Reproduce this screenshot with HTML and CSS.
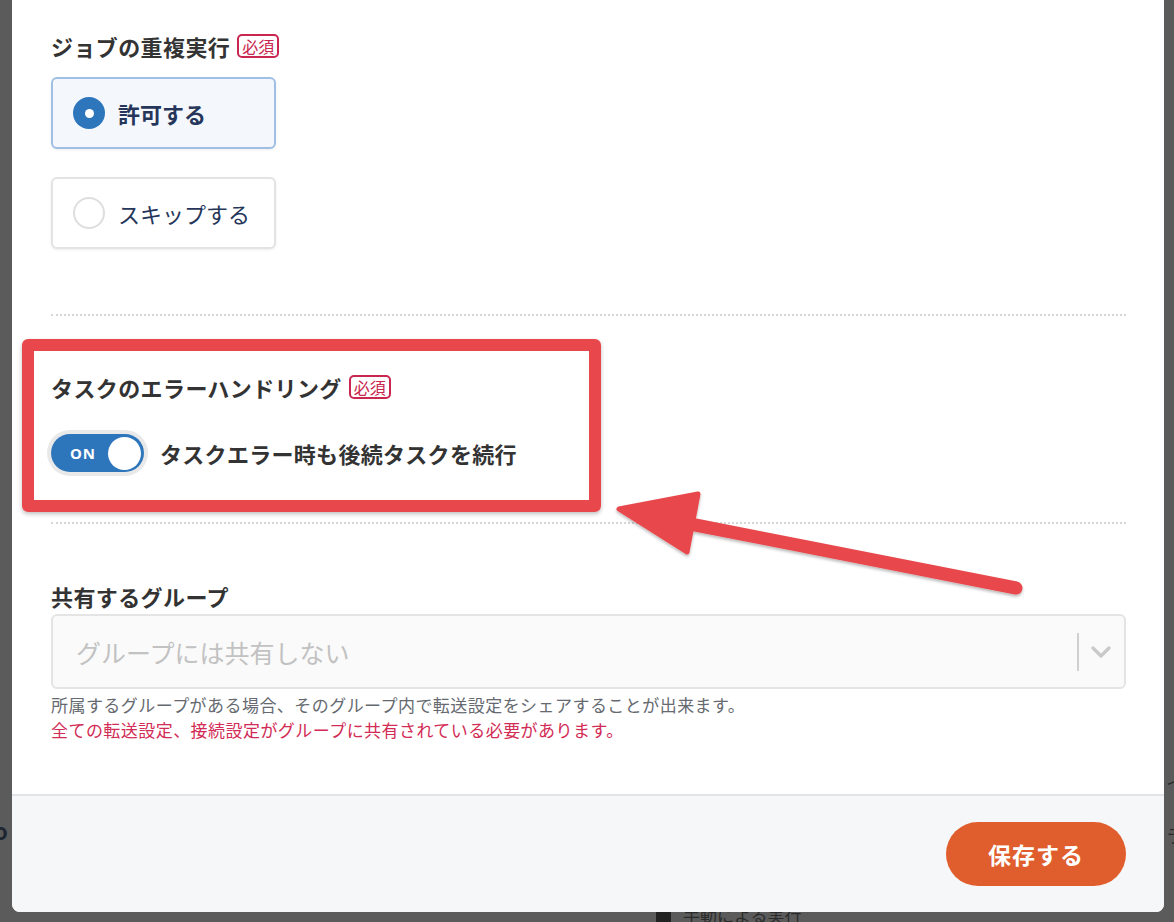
FILE: index.html
```html
<!DOCTYPE html>
<html lang="ja">
<head>
<meta charset="utf-8">
<title>ジョブ設定</title>
<link rel="stylesheet" href="styles.css">
</head>
<body>
<div class="backdrop">
  <div class="peek peek-left">o</div>
  <div class="peek peek-right1">イ</div>
  <div class="peek peek-right2">ラ</div>
  <div class="peek peek-bottom"><span class="sq"></span>手動による実行</div>

  <div class="modal">
    <div class="modal-body">
      <section class="field">
        <div class="label">ジョブの重複実行<span class="req">必須</span></div>
        <div class="radios">
          <label class="radio-card checked"><span class="dot"></span><span class="rtext">許可する</span></label>
          <label class="radio-card"><span class="dot"></span><span class="rtext">スキップする</span></label>
        </div>
      </section>

      <div class="sep sep-1"></div>

      <section class="field field-toggle">
        <div class="label">タスクのエラーハンドリング<span class="req">必須</span></div>
        <div class="toggle-row">
          <span class="switch"><span class="track"><span class="on">ON</span><span class="knob"></span></span></span>
          <span class="toggle-label">タスクエラー時も後続タスクを続行</span>
        </div>
      </section>

      <div class="sep sep-2"></div>

      <section class="field field-group">
        <div class="label">共有するグループ</div>
        <div class="select">
          <span class="placeholder">グループには共有しない</span>
          <span class="indicators">
            <span class="bar"></span>
            <svg class="chev" width="20" height="12" viewBox="0 0 20 12"><path d="M2 2 L10 10 L18 2" fill="none" stroke="#c9c9c9" stroke-width="3.2" stroke-linecap="round" stroke-linejoin="round"/></svg>
          </span>
        </div>
        <p class="help">所属するグループがある場合、そのグループ内で転送設定をシェアすることが出来ます。</p>
        <p class="warn">全ての転送設定、接続設定がグループに共有されている必要があります。</p>
      </section>
    </div>
    <div class="modal-footer">
      <button class="save" type="button">保存する</button>
    </div>
  </div>

  <div class="highlight"></div>
  <svg class="arrow" width="1174" height="922" viewBox="0 0 1174 922">
    <defs>
      <filter id="sh" x="-10%" y="-10%" width="120%" height="130%">
        <feDropShadow dx="0" dy="2" stdDeviation="1.6" flood-color="#000" flood-opacity="0.28"/>
      </filter>
    </defs>
    <g filter="url(#sh)" fill="#e8474c" stroke="#e8474c">
      <line x1="1016" y1="588" x2="680" y2="522" stroke-width="13" stroke-linecap="round"/>
      <polygon points="619,509 698,494 687,552" stroke-width="5" stroke-linejoin="round"/>
    </g>
  </svg>
</div>
</body>
</html>
```

FILE: styles.css
```css
* { box-sizing: border-box; }
html, body { margin: 0; padding: 0; }
body {
  font-family: "Noto Sans CJK JP", "Noto Sans", sans-serif;
  background: #5b5b5b;
}
.backdrop {
  position: relative;
  width: 1174px;
  height: 922px;
  overflow: hidden;
  background: #5b5b5b;
}
.peek {
  position: absolute;
  color: #1f2633;
  font-weight: 700;
  font-size: 18px;
  line-height: 20px;
}
.peek-left { left: -6px; top: 820px; font-size: 22px; }
.peek-right1 { left: 1166px; top: 772px; font-weight: 400; color: #2a2a2a; }
.peek-right2 { left: 1166px; top: 825px; font-weight: 400; color: #2a2a2a; }
.peek-bottom {
  left: 656px; top: 905px;
  display: flex; align-items: center; gap: 12px;
  font-weight: 400; color: #2a2a2a; font-size: 17px;
}
.peek-bottom .sq { width: 15px; height: 15px; background: #222; border-radius: 2px; display: inline-block; }

.modal {
  position: relative;
  margin-left: 12px;
  width: 1152px;
  height: 912px;
  background: #fff;
  border-radius: 0 0 8px 8px;
  display: flex;
  flex-direction: column;
  overflow: hidden;
}
.modal-body {
  flex: 1;
  padding: 31px 38px 0 39px;
}
.label {
  display: flex;
  align-items: center;
  font-size: 22px;
  line-height: 30px;
  font-weight: 700;
  color: #333;
  letter-spacing: 0.4px;
}
.req {
  display: inline-flex;
  align-items: center;
  justify-content: center;
  margin-left: 7px;
  height: 24px;
  padding: 0 3px;
  border: 2px solid #c92650;
  border-radius: 5px;
  color: #c92650;
  font-size: 16px;
  line-height: 20px;
  font-weight: 400;
  letter-spacing: 0;
}
.radios {
  margin-top: 16px;
  display: flex;
  flex-direction: column;
  gap: 28px;
}
.radio-card {
  width: 225px;
  height: 72px;
  display: flex;
  align-items: center;
  padding-left: 20px;
  border: 2px solid #e3e3e3;
  border-radius: 6px;
  background: #fff;
  box-shadow: 0 1px 3px rgba(0,0,0,0.07);
  font-size: 22px;
  color: #26365a;
}
.radio-card .dot {
  width: 32px;
  height: 32px;
  border-radius: 50%;
  border: 2px solid #dedede;
  background: #fff;
  flex: none;
  position: relative;
}
.radio-card .rtext { margin-left: 13px; line-height: 30px; }
.radio-card.checked {
  background: #f4f7fc;
  border-color: #9fc0e4;
  font-weight: 700;
}
.radio-card.checked .dot {
  border: none;
  background: #2e76bc;
}
.radio-card.checked .dot::after {
  content: "";
  position: absolute;
  left: 12px; top: 12px;
  width: 9px; height: 9px;
  border-radius: 50%;
  background: #fff;
}
.sep {
  height: 0;
  border-top: 2px dotted #d6d6d6;
}
.sep-1 { margin-top: 65px; }
.sep-2 { margin-top: 46px; }
.field-toggle { margin-top: 56px; }
.toggle-row {
  margin-top: 28px;
  margin-left: -4px;
  display: flex;
  align-items: center;
}
.switch {
  display: inline-block;
  padding: 4px;
  background: #e9e9e9;
  border-radius: 24px;
}
.track {
  width: 93px;
  height: 38px;
  border-radius: 19px;
  background: #2e76bc;
  display: flex;
  align-items: center;
  justify-content: space-between;
  padding: 0 3px 0 19px;
}
.on {
  color: #fff;
  font-family: "Noto Sans", "Open Sans", sans-serif;
  font-weight: 700;
  font-size: 15px;
  letter-spacing: 1px;
}
.knob {
  width: 33px;
  height: 33px;
  border-radius: 50%;
  background: #fff;
}
.toggle-label {
  margin-left: 12px;
  font-size: 22px;
  font-weight: 700;
  color: #333;
  line-height: 30px;
  letter-spacing: 0.3px;
}
.field-group { margin-top: 57px; }
.select {
  margin-top: 3px;
  height: 75px;
  border: 2px solid #e4e4e4;
  border-radius: 6px;
  background: #fafafa;
  display: flex;
  align-items: center;
  justify-content: space-between;
  padding: 0 13px 0 23px;
}
.placeholder {
  font-size: 25px;
  color: #c2c2c2;
  line-height: 30px;
}
.indicators {
  display: flex;
  align-items: center;
  gap: 12px;
}
.bar {
  width: 2px;
  height: 38px;
  background: #d0d0d0;
}
.chev { display: block; }
.help, .warn {
  margin: 0;
  font-size: 17px;
  line-height: 25px;
  letter-spacing: 0.45px;
}
.help { margin-top: 3px; color: #666a70; }
.warn { color: #d22b55; }

.modal-footer {
  height: 118px;
  border-top: 2px solid #e2e3e7;
  background: #f6f7f9;
  display: flex;
  justify-content: flex-end;
  align-items: flex-start;
  padding: 26px 38px 0 0;
}
.save {
  width: 180px;
  height: 64px;
  border: none;
  border-radius: 32px;
  background: #e05d2d;
  color: #fff;
  font-family: "Noto Sans CJK JP", sans-serif;
  font-size: 23px;
  font-weight: 700;
  letter-spacing: 1px;
}

.highlight {
  position: absolute;
  left: 22px;
  top: 339px;
  width: 579px;
  height: 173px;
  border: 12px solid #e8474c;
  border-radius: 6px;
  box-shadow: 0 2px 4px rgba(0,0,0,0.25);
  pointer-events: none;
}
.arrow {
  position: absolute;
  left: 0;
  top: 0;
  pointer-events: none;
}
```
